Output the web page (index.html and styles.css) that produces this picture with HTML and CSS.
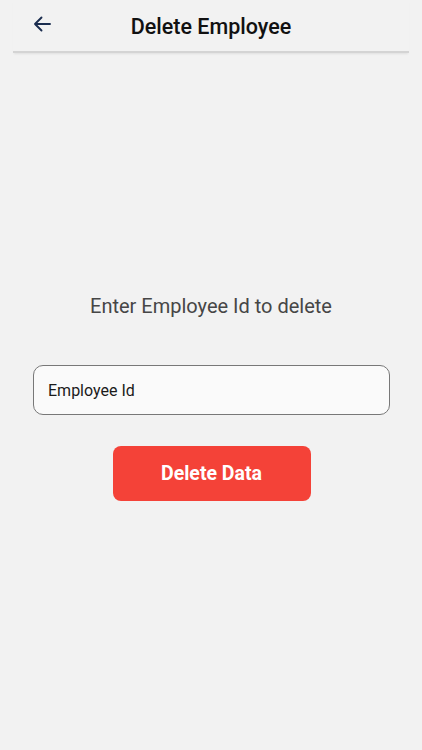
FILE: index.html
```html
<!DOCTYPE html>
<html>
<head>
<meta charset="utf-8">
<link rel="stylesheet" href="styles.css">
</head>
<body>
<div class="screen">
  <header class="appbar">
    <span class="back">
      <svg width="18" height="16" viewBox="0 0 18 16"><path d="M17 8H2M8.5 1.5L2 8l6.5 6.5" fill="none" stroke="#1b2d4f" stroke-width="1.9" stroke-linecap="round" stroke-linejoin="round"/></svg>
    </span>
    <h1 class="title">Delete Employee</h1>
  </header>
  <main class="content">
    <p class="prompt">Enter Employee Id to delete</p>
    <div class="field">Employee Id</div>
    <button class="delete-btn">Delete Data</button>
  </main>
</div>
</body>
</html>
```
FILE: styles.css
```css
html, body {
  margin: 0;
  padding: 0;
  background: #f2f2f2;
  font-family: Roboto, "Noto Sans", sans-serif;
}
.screen {
  width: 422px;
  height: 750px;
  display: flex;
  flex-direction: column;
}
.appbar {
  margin: 0 13px;
  height: 51px;
  display: flex;
  align-items: center;
  justify-content: center;
  position: relative;
  border-bottom: 2px solid #d4d4d4;
  box-shadow: 0 2px 2px -1px rgba(0,0,0,0.08);
}
.back {
  position: absolute;
  left: 20px;
  top: 16px;
  display: flex;
}
.title {
  margin: 0;
  font-size: 21.5px;
  font-weight: 500;
  color: #111;
  padding-top: 1px;
}
.content {
  display: flex;
  flex-direction: column;
  align-items: center;
  padding-top: 241px;
}
.prompt {
  margin: 0;
  font-size: 20px;
  color: #464646;
  line-height: 24px;
}
.field {
  box-sizing: border-box;
  margin-top: 47px;
  margin-left: 1px;
  width: 357px;
  height: 50px;
  border: 1.3px solid #787878;
  border-radius: 10px;
  background: #fafafa;
  font-size: 16px;
  color: #1a1a1a;
  display: flex;
  align-items: center;
  padding-left: 14px;
}
.delete-btn {
  margin-top: 31px;
  margin-left: 1px;
  width: 198px;
  height: 55px;
  border: none;
  border-radius: 8px;
  background: #f44238;
  color: #fff;
  font-family: Roboto, sans-serif;
  font-size: 19.5px;
  font-weight: 700;
}
```
